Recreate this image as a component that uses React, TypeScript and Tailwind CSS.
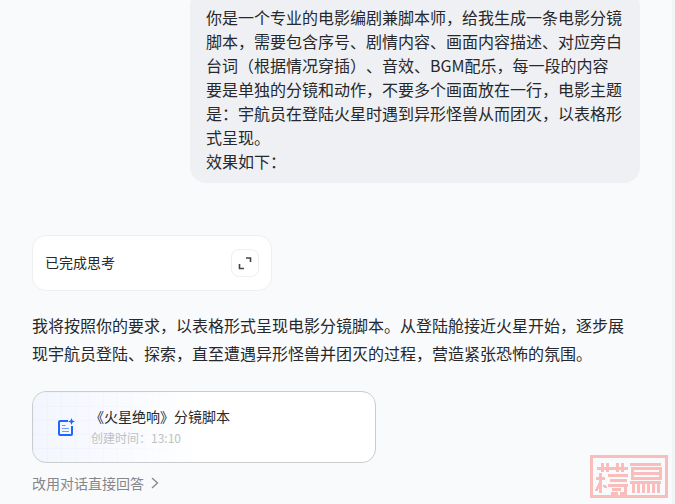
import React from "react";

const FONT = "font-['Microsoft_YaHei','Noto_Sans_CJK_SC','Noto_Sans',sans-serif]";

function ExpandIcon() {
  return (
    <svg width="14" height="14" viewBox="0 0 14 14" fill="none" stroke="#444" strokeWidth="1.6">
      <path d="M8 2H12.5V6" />
      <path d="M1.5 8V12.5H6" />
    </svg>
  );
}

function DocIcon() {
  return (
    <svg width="17" height="18" viewBox="0 0 17 18" fill="none">
      <path d="M10 3H2A1 1 0 0 0 1 4V16A1 1 0 0 0 2 17H13A1 1 0 0 0 14 16V8" stroke="#1f66ff" strokeWidth="2" />
      <path d="M4 7.5H7.5M4 10.5H11M4 13.5H11" stroke="#6f9bff" strokeWidth="1" />
      <path d="M13.5 0L14.5 2.5L17 3.5L14.5 4.5L13.5 7L12.5 4.5L10 3.5L12.5 2.5Z" fill="#1f66ff" />
    </svg>
  );
}

function Seal() {
  const c = "#fbbcbc";
  return (
    <svg width="78" height="43" viewBox="0 0 78 43" fill="none" shapeRendering="crispEdges">
      <rect x="1.5" y="1.5" width="75" height="40" stroke={c} strokeWidth="3" />
      <g stroke={c} strokeWidth="3">
        <path d="M7 13H38M12 8V17M17 8V17M27 8V17M32 8V17" />
        <path d="M10 18V38M6 23H15M6 36L10 28M14 30L16 33" />
        <path d="M18 20H38M20 25H37M18 30H38M35 30V38H30M22 34H31M21 38H28" />
        <path d="M40 9H71M42 13H70V23H42ZM42 18H70M40 27H71" />
        <path d="M43 29V38M48 29V38M53 29V38M58 29V38M63 29V38M68 29V38" />
      </g>
    </svg>
  );
}

export default function App() {
  return (
    <div className={`relative h-[504px] w-[675px] overflow-hidden bg-[#f9fafc] text-[#26282c] [text-spacing-trim:space-all] ${FONT}`}>
      <div className="absolute right-0 top-0 h-full w-[3px] bg-[#f3f4f6]" />
      <div className="flex justify-end pr-[35px]">
        <div className="-mt-[10px] w-[450px] rounded-[16px] bg-[#eff0f3] pb-[10px] pl-[16px] pr-[16px] pt-[15px] text-[16px] leading-[24px]">
          你是一个专业的电影编剧兼脚本师，给我生成一条电影分镜脚本，需要包含序号、剧情内容、画面内容描述、对应旁白台词（根据情况穿插）、音效、BGM配乐，每一段的内容要是单独的分镜和动作，不要多个画面放在一行，电影主题是：宇航员在登陆火星时遇到异形怪兽从而团灭，以表格形式呈现。
          <br />
          效果如下：
        </div>
      </div>

      <div className="pl-[32px] pt-[52px]">
        <div className="flex h-[56px] w-[240px] items-center justify-between rounded-[14px] border border-[#eeeff2] bg-white pl-[12px] pr-[12px]">
          <span className="mb-[2px] text-[14px] leading-[20px]">已完成思考</span>
          <div className="flex h-[28px] w-[28px] items-center justify-center rounded-[8px] border border-[#eeeff2]">
            <ExpandIcon />
          </div>
        </div>

        <p className="mt-[20px] w-[600px] text-[16px] leading-[28px]">
          我将按照你的要求，以表格形式呈现电影分镜脚本。从登陆舱接近火星开始，逐步展现宇航员登陆、探索，直至遭遇异形怪兽并团灭的过程，营造紧张恐怖的氛围。
        </p>

        <div className="relative mt-[24px] flex h-[72px] w-[344px] items-center overflow-hidden rounded-[14px] border border-[#cbccd0] bg-gradient-to-r from-[#f3f6fe] via-white to-white pl-[25px]">
          <div className="absolute inset-y-0 left-0 w-[150px] bg-[linear-gradient(#eef2fb_1px,transparent_1px),linear-gradient(90deg,#eef2fb_1px,transparent_1px)] bg-[size:14px_14px] [mask-image:linear-gradient(90deg,black,transparent)]" />
          <div className="relative flex items-center">
            <DocIcon />
            <div className="ml-[16px] flex flex-col">
              <span className="-ml-[1px] mb-[3px] -mt-[1px] text-[14px] leading-[20px]">《火星绝响》分镜脚本</span>
              <span className="text-[12px] leading-[18px] text-[#c0c1c4]">创建时间：13:10</span>
            </div>
          </div>
        </div>

        <div className="mt-[10px] flex items-center text-[14px] leading-[20px] text-[#85878c]">
          <span>改用对话直接回答</span>
          <svg className="ml-[7px]" width="8" height="12" viewBox="0 0 8 12" fill="none" stroke="#85878c" strokeWidth="1.3">
            <path d="M1 1L6.5 6L1 11" />
          </svg>
        </div>
      </div>

      <div className="absolute bottom-[6px] right-[7px]">
        <Seal />
      </div>
    </div>
  );
}
